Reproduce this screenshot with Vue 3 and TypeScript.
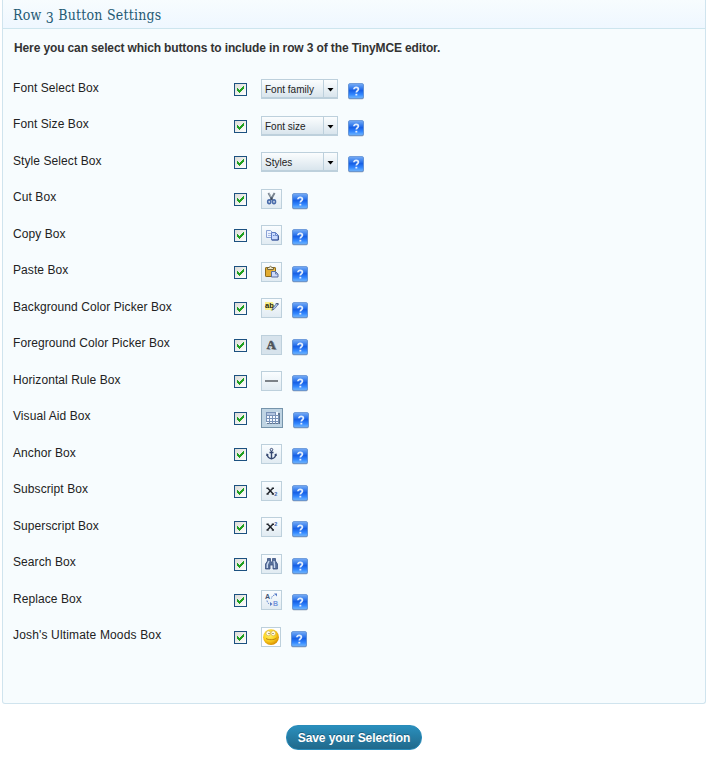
<script setup lang="ts">
interface Row {
  label: string
  kind: 'select' | 'icon'
  value: string
}

const rows: Row[] = [
  { label: 'Font Select Box', kind: 'select', value: 'Font family' },
  { label: 'Font Size Box', kind: 'select', value: 'Font size' },
  { label: 'Style Select Box', kind: 'select', value: 'Styles' },
  { label: 'Cut Box', kind: 'icon', value: 'cut' },
  { label: 'Copy Box', kind: 'icon', value: 'copy' },
  { label: 'Paste Box', kind: 'icon', value: 'paste' },
  { label: 'Background Color Picker Box', kind: 'icon', value: 'backcolor' },
  { label: 'Foreground Color Picker Box', kind: 'icon', value: 'forecolor' },
  { label: 'Horizontal Rule Box', kind: 'icon', value: 'hr' },
  { label: 'Visual Aid Box', kind: 'icon', value: 'visualaid' },
  { label: 'Anchor Box', kind: 'icon', value: 'anchor' },
  { label: 'Subscript Box', kind: 'icon', value: 'sub' },
  { label: 'Superscript Box', kind: 'icon', value: 'sup' },
  { label: 'Search Box', kind: 'icon', value: 'search' },
  { label: 'Replace Box', kind: 'icon', value: 'replace' },
  { label: "Josh's Ultimate Moods Box", kind: 'icon', value: 'moods' },
]
</script>

<template>
  <main class="page">
    <section class="panel">
      <h3 class="title">Row <span class="oldstyle">3</span> Button Settings</h3>
      <p class="intro">Here you can select which buttons to include in row 3 of the TinyMCE editor.</p>
      <div class="rows">
        <div v-for="row in rows" :key="row.label" class="row">
          <span class="label">{{ row.label }}</span>
          <span class="check">
            <svg width="11" height="11" viewBox="0 0 11 11" shape-rendering="crispEdges">
              <path fill="#21a121" d="M2 4h1v1h1v1h1v-1h1v-1h1v-1h1v-1h1v3h-1v1h-1v1h-1v1h-1v1h-1v-1h-1v-1h-1z" />
            </svg>
          </span>
          <span v-if="row.kind === 'select'" class="select">
            <span class="value">{{ row.value }}</span>
            <span class="arrow"><svg width="7" height="4" viewBox="0 0 7 4"><path d="M.5 0h6L3.500 3.500z" /></svg></span>
          </span>
          <span v-else class="tool" :class="row.value">
            <svg v-if="row.value === 'cut'" width="19" height="18" viewBox="0 0 19 18">
              <path d="M6.400 3l4 7M12.600 3l-4 7" stroke="#78838f" stroke-width="1.900" fill="none" />
              <path d="M7.200 3.200l2.600 5" stroke="#c0c7cf" stroke-width=".7" />
              <ellipse cx="7.200" cy="11.800" rx="1.500" ry="1.900" stroke="#4a6cab" stroke-width="1.600" fill="none" />
              <ellipse cx="12" cy="11.800" rx="1.500" ry="1.900" stroke="#4a6cab" stroke-width="1.600" fill="none" />
              <path d="M9.500 7.300v2.500" stroke="#39455a" stroke-width="2" />
            </svg>
            <svg v-else-if="row.value === 'copy'" width="19" height="18" viewBox="0 0 19 18">
              <path d="M4.500 4.500h4l2 2v5h-6z" fill="#edf3ff" stroke="#8ba3d5" />
              <path d="M6 7.500h3M6 9.500h3" stroke="#a9bce2" />
              <path d="M9.500 6.500h4l2.500 2.500v5H9.500z" fill="#c9daff" stroke="#5c7bc4" />
              <path d="M13.500 6.500v3H16M11 9.500h1.500" stroke="#6989cb" fill="none" />
              <path d="M10 14h6.500V9.500" stroke="#3c5693" fill="none" />
            </svg>
            <svg v-else-if="row.value === 'paste'" width="19" height="18" viewBox="0 0 19 18">
              <rect x="3.500" y="4.500" width="10" height="9" rx=".6" fill="#e2ac30" stroke="#8c6a1c" />
              <path d="M5 6h7v6" stroke="#ffdf79" fill="none" />
              <path d="M5.500 6.500V4.500H7q1.500-2.500 3 0h1.500v2z" fill="#eee8c9" stroke="#685b37" stroke-width=".9" />
              <path d="M9.500 8.500h4l2.500 2.500v3H9.500z" fill="#cddafa" stroke="#586d9e" />
              <path d="M13.500 8.500V11H16" fill="none" stroke="#6b80ae" />
            </svg>
            <svg v-else-if="row.value === 'backcolor'" width="19" height="18" viewBox="0 0 19 18">
              <path d="M3 3h8l1 3-4 5H3z" fill="#faf08b" />
              <path d="M9 11.500l4-5" stroke="#e5e35c" stroke-width="2" />
              <text x="3" y="9" class="ab">ab</text>
              <path d="M10 11l1-2 3.500-4.500 1.700 1-3.600 4.200z" fill="#b3c7f0" stroke="#59709e" stroke-width=".8" />
              <path d="M9.500 11.500l1.500-1.800 1 1zM13 4h3.500v2" fill="#4e607f" />
            </svg>
            <svg v-else-if="row.value === 'forecolor'" width="19" height="18" viewBox="0 0 19 18">
              <text x="6.200" y="13.500" class="fore shadow">A</text>
              <text x="4.700" y="13" class="fore">A</text>
            </svg>
            <svg v-else-if="row.value === 'hr'" width="19" height="18" viewBox="0 0 19 18">
              <path d="M3 8h13v2H3z" fill="#7c8288" />
            </svg>
            <svg v-else-if="row.value === 'visualaid'" width="20" height="18" viewBox="0 0 20 18" shape-rendering="crispEdges">
              <path d="M5 4h13v11H5z" fill="#607590" />
              <path d="M4 3h12v11H4z" fill="#f4f9ff" />
              <path d="M4 3.500h9M4.500 3v10M4 6.500h13M4 9.500h13M4 12.500h13M7.500 4v11M10.500 4v11M13.500 3v12M16.500 6v9" stroke="#7892b7" fill="none" />
              <path d="M5 4h8v2H5z" fill="#b2c4df" />
            </svg>
            <svg v-else-if="row.value === 'anchor'" width="19" height="18" viewBox="0 0 19 18">
              <circle cx="9.500" cy="4.700" r="1.300" fill="#eef4fb" stroke="#34466f" />
              <path d="M7.500 7.500h4M9.500 6v8M5.200 9.500c.2 2.500 1.800 3.800 4.300 4.200 2.500-.4 4.100-1.700 4.300-4.200" stroke="#34466f" stroke-width="1.400" fill="none" />
              <path d="M4 11l.7-2.700L7 10zM15 11l-.7-2.700L12 10z" fill="#34466f" />
            </svg>
            <svg v-else-if="row.value === 'sub' || row.value === 'sup'" width="19" height="18" viewBox="0 0 19 18">
              <path d="M4.500 6.300h2.200M9.800 6.300H12M4.500 11.900h2.200M9.800 11.900H12M5.600 6l5.600 6M11 6l-5.600 6" stroke="#20242b" stroke-width="1.500" fill="none" />
              <text x="12.300" :y="row.value === 'sub' ? 14 : 7.500" class="script">2</text>
            </svg>
            <svg v-else-if="row.value === 'search'" width="19" height="18" viewBox="0 0 19 18">
              <path d="M3.500 14V9l2-3V3.500h3V6l1 1.500 1-1.500V3.500h3V6l2 3v5H11v-4H8v4z" fill="#587099" stroke="#3a5080" stroke-width=".8" />
              <path d="M5.300 13V9.500L7 6M12.500 13V9.500L12 6" stroke="#c8d8f0" stroke-width="1.400" fill="none" />
            </svg>
            <svg v-else-if="row.value === 'replace'" width="19" height="18" viewBox="0 0 19 18">
              <text x="3" y="8" class="letter dark">A</text>
              <text x="11" y="15" class="letter">B</text>
              <path d="M12.500 4c-2 .4-3 1.800-3 4M5 9.500c.2 2.500 1.500 3.500 4 3.500" fill="none" stroke="#6789cc" stroke-dasharray="1.500 1" />
              <path d="M12 2.500h3v3zM8 11l2.500 2L8 15z" fill="#5579c5" />
            </svg>
            <svg v-else width="18" height="18" viewBox="0 0 18 18">
              <defs>
                <radialGradient id="face" cx=".4" cy=".35" r=".65">
                  <stop offset="0" stop-color="#fff56a" /><stop offset=".6" stop-color="#fbd020" /><stop offset="1" stop-color="#d99000" />
                </radialGradient>
              </defs>
              <circle cx="9" cy="9.200" r="7.900" fill="url(#face)" />
              <ellipse cx="6.300" cy="5.300" rx="2.300" ry="2.500" fill="#fffbe0" stroke="#cfa640" stroke-width=".6" />
              <ellipse cx="11.300" cy="5.300" rx="2.300" ry="2.500" fill="#fffbe0" stroke="#cfa640" stroke-width=".6" />
              <path d="M6.500 5h1v1h-1zM10.500 5h1v1h-1z" fill="#5c4b22" />
              <path d="M4 10.500c2.500 1.700 8 1.700 10.500-.5" fill="none" stroke="#b07a10" stroke-width=".9" />
            </svg>
          </span>
          <span class="help">
            <svg width="16" height="17" viewBox="0 0 16 17">
              <defs>
                <linearGradient id="blue" x1="0" y1="0" x2="0" y2="1">
                  <stop offset="0" stop-color="#79adf5" /><stop offset=".22" stop-color="#4b8df1" /><stop offset=".48" stop-color="#1760e6" /><stop offset=".75" stop-color="#3488ff" /><stop offset="1" stop-color="#73b9ff" />
                </linearGradient>
              </defs>
              <rect x=".3" y="1" width="15.400" height="15.300" rx="1.500" fill="#8392aa" />
              <rect x=".5" y=".5" width="15" height="14.800" rx="1.500" fill="url(#blue)" stroke="#5f90d6" stroke-width=".8" />
              <path d="M5.900 6.300c0-2.600 4.500-2.600 4.500 0 0 1.500-2.100 1.500-2.100 3.300" fill="none" stroke="#e3eefe" stroke-width="1.700" />
              <path d="M7.400 10.800h1.900v1.700H7.400z" fill="#e3eefe" />
            </svg>
          </span>
        </div>
      </div>
    </section>
    <button class="save" type="button">Save your Selection</button>
  </main>
</template>

<style>
body { margin: 0; background: #fff; }
</style>

<style scoped>
.page {
  display: flex;
  flex-direction: column;
  height: 766px;
  overflow: hidden;
  font-family: "Liberation Sans", Arial, sans-serif;
  color: #222;
}
.panel {
  box-sizing: border-box;
  height: 704px;
  margin: 0 3px 0 2px;
  border: 1px solid #d0e4ee;
  border-top: 0;
  border-radius: 0 0 3px 3px;
  background: #f7fcfe;
}
.title {
  box-sizing: border-box;
  height: 29px;
  margin: 0;
  padding-left: 10px;
  border-bottom: 1px solid #cde5ee;
  background: linear-gradient(#f7fcfe, #eff7ff);
  color: #245a74;
  font: 400 14px/30px "DejaVu Serif Condensed", "DejaVu Serif", serif;
  letter-spacing: .22px;
  white-space: nowrap;
}
.oldstyle { position: relative; top: 3px; }
.intro {
  box-sizing: border-box;
  height: 50px;
  margin: 0;
  padding-left: 11px;
  font-size: 12px;
  font-weight: bold;
  line-height: 38px;
  letter-spacing: -.127px;
  color: #333;
  white-space: nowrap;
}
.row {
  display: flex;
  align-items: flex-start;
  height: 37px;
  padding-left: 10px;
}
.row:nth-child(even) { height: 36px; }
.label {
  width: 221px;
  padding-top: 1px;
  font-size: 12px;
  line-height: 16px;
  letter-spacing: .08px;
  white-space: nowrap;
}
.row:nth-child(even) .label { padding-top: 0; }
.row:last-child .label { letter-spacing: .16px; }
.check {
  width: 11px;
  height: 11px;
  margin: 4px 14px 0 0;
  border: 1px solid #1c5180;
  background: linear-gradient(135deg, #dcdcd7, #fff);
}
svg { display: block; }
.select {
  box-sizing: border-box;
  display: flex;
  width: 77px;
  height: 20px;
  border: 1px solid #bdd0dc;
  border-bottom-width: 2px;
  background: linear-gradient(#fbfdfe, #d9e5ed);
  font-size: 10px;
  line-height: 19px;
}
.value { width: 58px; padding-left: 3px; color: #222; white-space: nowrap; }
.arrow { width: 14px; padding: 8px 0 0 3px; box-sizing: border-box; border-left: 1px solid #bdd0dc; }
.tool {
  box-sizing: border-box;
  width: 21px;
  height: 20px;
  border: 1px solid #bdd0dc;
  background: linear-gradient(#fafdff, #e1ebf2);
}
.tool.forecolor { background: #d7e3ec; }
.tool.visualaid { width: 22px; border-color: #7594ab; background: #bfd4e3; }
.tool.moods { width: 20px; background: #fff; }
.help { width: 16px; margin: 4px 0 0 10px; }
.ab { font: bold 7.5px "Liberation Sans", sans-serif; fill: #241f12; }
.fore { font: bold 12px "Liberation Serif", serif; fill: #4c5258; stroke: #4c5258; stroke-width: .5px; }
.fore.shadow { fill: #939ca5; stroke: none; }
.script { font: bold 5.5px "Liberation Sans", sans-serif; fill: #3f63aa; }
.letter { font: bold 7px "Liberation Sans", sans-serif; fill: #7597dc; }
.letter.dark { fill: #435476; }
.save {
  width: 136px;
  height: 25px;
  margin: 21px 0 0 286px;
  padding: 0;
  border: 1px solid #298cba;
  border-radius: 12px;
  background: linear-gradient(#2a8fbd, #21698b);
  color: #fff;
  font: bold 12px/22px "Liberation Sans", Arial, sans-serif;
  letter-spacing: -.08px;
  text-shadow: 0 -1px 0 rgba(0, 0, 0, .3);
  white-space: nowrap;
}
</style>
